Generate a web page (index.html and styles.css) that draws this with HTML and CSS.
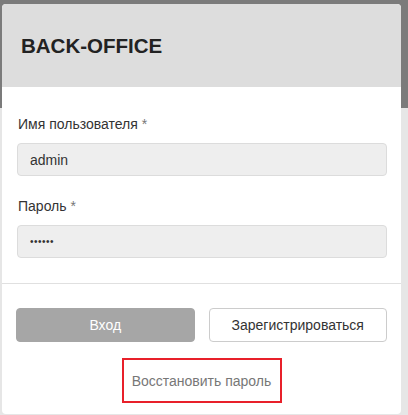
FILE: index.html
```html
<!DOCTYPE html>
<html lang="ru">
<head>
  <meta charset="UTF-8">
  <title>Back-office</title>
  <link rel="stylesheet" href="styles.css">
</head>
<body>
  <div class="modal">
    <div class="modal-header">
      <h2>BACK-OFFICE</h2>
    </div>
    <form class="modal-body">
      <label for="login">Имя пользователя <span class="req">*</span></label>
      <input type="text" id="login" value="admin">
      <label for="pass">Пароль <span class="req">*</span></label>
      <input type="password" id="pass" value="secret">
    </form>
    <div class="modal-footer">
      <div class="actions">
        <button class="btn btn-primary" disabled>Вход</button>
        <button class="btn btn-default">Зарегистрироваться</button>
      </div>
      <a class="restore" href="#">Восстановить пароль</a>
    </div>
  </div>
</body>
</html>
```

FILE: styles.css
```css
body {
  margin: 0;
  height: 415px;
  font-family: Arial, "Liberation Sans", sans-serif;
  color: #333;
  background: linear-gradient(#7b7b7b 0, #7b7b7b 108px, #e6e6e6 108px);
  overflow: hidden;
}
.modal {
  width: 399px;
  margin: 4px 0 0 2px;
  background: #fff;
  border-radius: 4px;
  overflow: hidden;
}
.modal-header {
  height: 83px;
  background: #dddddd;
  display: flex;
  align-items: center;
  padding-left: 19px;
}
.modal-header h2 {
  margin: 0;
  font-size: 20.5px;
  font-weight: bold;
  color: #222;
}
.modal-body {
  display: flex;
  flex-direction: column;
  padding: 29px 14px 25px 15px;
  border-bottom: 1px solid #e0e0e0;
}
.modal-body label {
  font-size: 14px;
  margin-left: 1px;
  margin-bottom: 11px;
  color: #333;
}
.req {
  color: #777;
}
.modal-body input {
  height: 33px;
  box-sizing: border-box;
  border: 1px solid #dcdcdc;
  border-radius: 4px;
  background: #eeeeee;
  padding: 0 12px;
  font-family: inherit;
  font-size: 14px;
  color: #333;
  margin-bottom: 22px;
}
.modal-body input[type="password"] {
  font-size: 10px;
  letter-spacing: 0.5px;
}
.modal-body input:last-child {
  margin-bottom: 0;
}
.modal-footer {
  display: flex;
  flex-direction: column;
  align-items: center;
  padding: 24px 14px 11px 14px;
}
.actions {
  display: flex;
  gap: 14px;
  width: 100%;
}
.btn {
  flex: 1;
  height: 34px;
  border-radius: 4px;
  font-family: inherit;
  font-size: 14px;
}
.btn-primary {
  background: #a6a6a6;
  border: 1px solid #a6a6a6;
  color: #fff;
}
.btn-default {
  background: #fff;
  border: 1px solid #cccccc;
  color: #333;
}
.restore {
  margin-top: 16px;
  width: 156px;
  height: 41px;
  border: 2px solid #e8202a;
  display: flex;
  align-items: center;
  justify-content: center;
  font-size: 14px;
  color: #777;
  text-decoration: none;
}
```
